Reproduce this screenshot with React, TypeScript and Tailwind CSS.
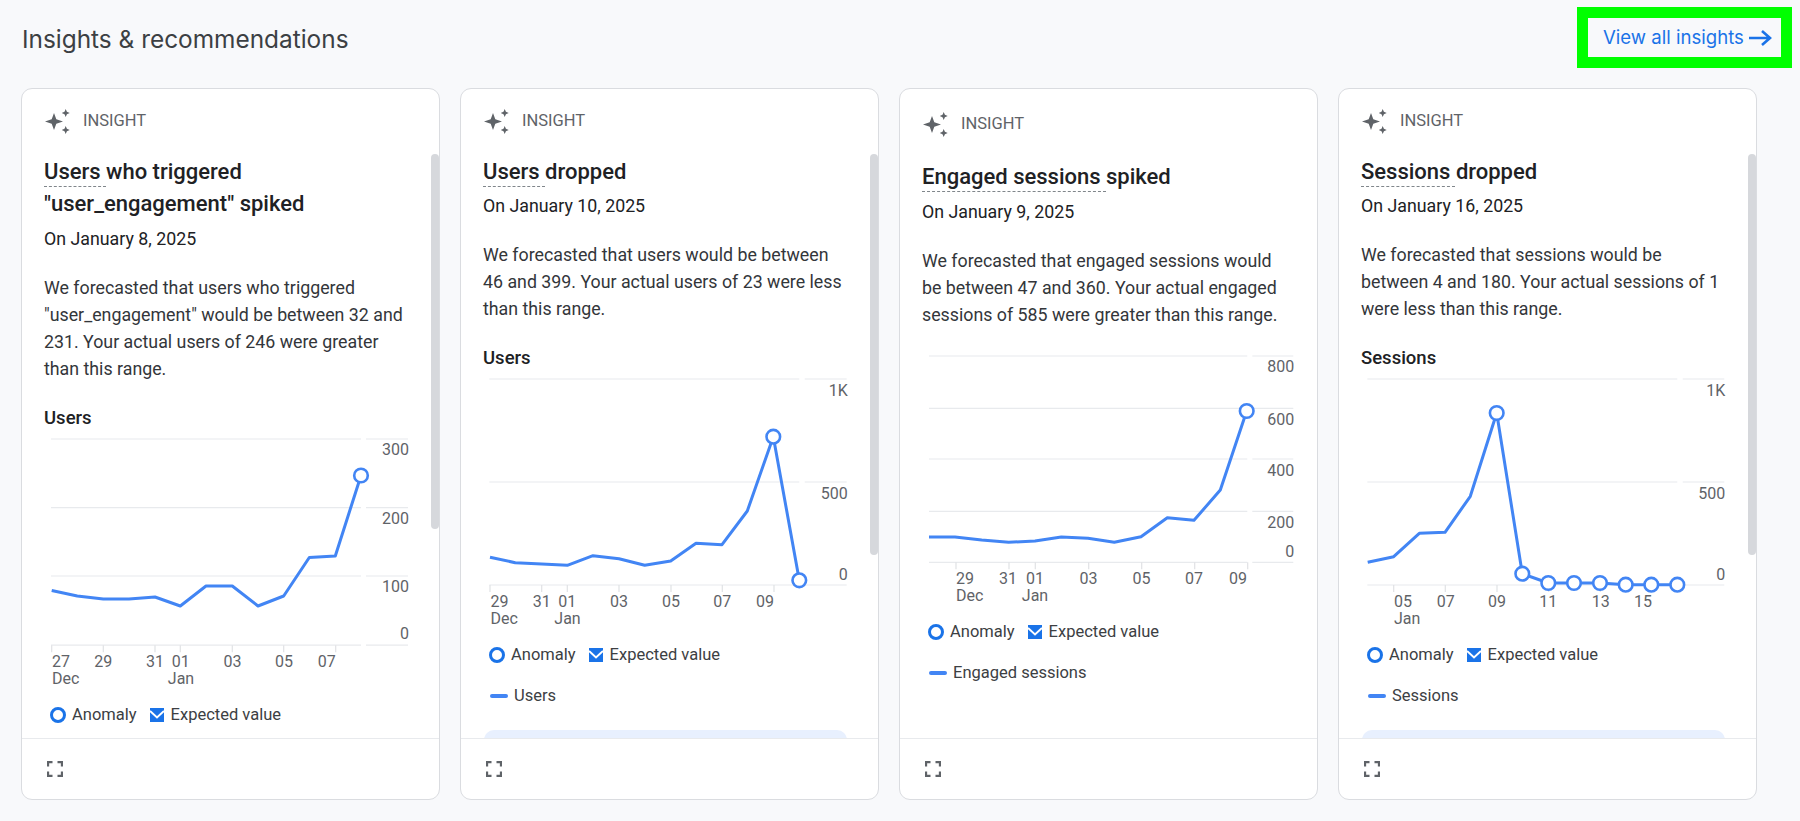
const FONT = "font-['Roboto',sans-serif]"

type Pt = [number, number]
type XLabel = { t: string; x: number; a?: 'start' | 'middle' | 'end' }

interface ChartProps {
  grid: number[]
  x0: number
  x1: number
  x2: number
  x3: number
  yLabels: { t: string; y: number }[]
  ticks: number[]
  xLabels: XLabel[]
  months: XLabel[]
  points: Pt[]
  dots: Pt[]
}

function Chart({ grid, x0, x1, x2, x3, yLabels, ticks, xLabels, months, points, dots }: ChartProps) {
  const base = grid[grid.length - 1]
  return (
    <svg width="372" height="250" viewBox="23 -2 372 250" className="block overflow-visible">
      {grid.map((y) => (
        <g key={y} stroke="#e8eaed" strokeWidth="1.2">
          <line x1={x0} x2={x1} y1={y} y2={y} />
          <line x1={x2} x2={x3} y1={y} y2={y} />
        </g>
      ))}
      {ticks.map((x) => (
        <line key={x} x1={x} x2={x} y1={base} y2={base + 7} stroke="#e0e2e5" strokeWidth="1.2" />
      ))}
      <g fill="#5f6368" fontSize="16" fontFamily="Roboto, sans-serif">
        {yLabels.map((l) => (
          <text key={l.t} x={x3 + 1} y={l.y} textAnchor="end">
            {l.t}
          </text>
        ))}
        {xLabels.map((l) => (
          <text key={l.t} x={l.x} y={base + 22} textAnchor={l.a ?? 'middle'}>
            {l.t}
          </text>
        ))}
        {months.map((l) => (
          <text key={l.t} x={l.x} y={base + 38.5} textAnchor={l.a ?? 'middle'}>
            {l.t}
          </text>
        ))}
      </g>
      <polyline
        points={points.map((p) => p.join(',')).join(' ')}
        fill="none"
        stroke="#4285f4"
        strokeWidth="3"
        strokeLinejoin="round"
      />
      {dots.map(([x, y]) => (
        <circle key={x} cx={x} cy={y} r="6.8" fill="#fff" stroke="#4285f4" strokeWidth="2.6" />
      ))}
    </svg>
  )
}

function SparkleIcon() {
  return (
    <svg width="27" height="27" viewBox="0 0 27 27" fill="#5f6368" className="shrink-0">
      <path d="M10 5 12.300 11.200 19 13.500 12.300 15.800 10 22 7.700 15.800 1 13.500 7.700 11.200Z" />
      <path d="M21.700 1 22.900 3.800 25.700 5 22.900 6.200 21.700 9 20.500 6.200 17.700 5 20.500 3.800Z" />
      <path d="M21.700 18 22.900 20.800 25.700 22 22.900 23.200 21.700 26 20.500 23.200 17.700 22 20.500 20.800Z" />
    </svg>
  )
}

function ExpandIcon() {
  return (
    <svg width="16" height="16" viewBox="0 0 16 16" fill="none" stroke="#5f6368" strokeWidth="2.3">
      <path d="M1 5.500V1H5.500M10.500 1H15V5.500M15 10.500V15H10.500M5.500 15H1V10.500" />
    </svg>
  )
}

function ExpectedIcon() {
  return (
    <svg width="14" height="14" viewBox="0 0 14 14" className="block shrink-0">
      <rect width="14" height="14" fill="#1a73e8" />
      <path d="M0 3 7 9.500 14 3" fill="none" stroke="#fff" strokeWidth="2" />
    </svg>
  )
}

function Legend({ name }: { name?: string }) {
  return (
    <div className="text-[16.5px] leading-[24px] text-[#3c4043]">
      <div className="flex items-center">
        <span className="ml-[6px] size-[16px] shrink-0 rounded-full border-[3px] border-[#1a73e8]" />
        <span className="ml-[6px]">Anomaly</span>
        <span className="ml-[13px]">
          <ExpectedIcon />
        </span>
        <span className="ml-[7px]">Expected value</span>
      </div>
      {name && (
        <div className="mt-[17px] flex items-center">
          <span className="ml-[7px] h-[4px] w-[18px] rounded-full bg-[#4285f4]" />
          <span className="ml-[6px]">{name}</span>
        </div>
      )}
    </div>
  )
}

interface CardProps {
  lead: string
  rest: string
  date: string
  body: string[]
  chartTitle?: string
  chart: ChartProps
  legendName?: string
  scrollHeight?: number
  banner?: boolean
  offset?: boolean
  compact?: boolean
}

function InsightCard({ lead, rest, date, body, chartTitle, chart, legendName, scrollHeight, banner, offset, compact }: CardProps) {
  return (
    <div className="relative flex h-[712px] w-[419px] shrink-0 flex-col overflow-hidden rounded-[11px] border border-[#dadce0] bg-white">
      <div className={offset ? 'min-h-0 flex-1 overflow-hidden pt-[22px] pl-[22px]' : 'min-h-0 flex-1 overflow-hidden pt-[19px] pl-[22px]'}>
        <div className="flex h-[27px] items-center gap-[12px]">
          <SparkleIcon />
          <span className="text-[16.5px] text-[#5f6368]">INSIGHT</span>
        </div>
        <h3 className={offset ? 'mt-[23px] w-[350px] text-[22px] leading-[32px] font-medium text-[#202124]' : 'mt-[21px] w-[350px] text-[22px] leading-[32px] font-medium text-[#202124]'}>
          <span className="underline decoration-[#80868b] decoration-dashed decoration-1 underline-offset-[7px]">{lead}</span>
          {rest}
        </h3>
        <p className={compact ? 'mt-[2px] text-[17.8px] leading-[32px] text-[#202124]' : 'mt-[3px] text-[17.8px] leading-[32px] text-[#202124]'}>{date}</p>
        <div className="mt-[19px] text-[17.8px] leading-[27px] text-[#33363a]">
          {body.map((line) => (
            <div key={line} className="whitespace-nowrap">
              {line}
            </div>
          ))}
        </div>
        {chartTitle ? (
          <h4 className="mt-[23px] mb-[5px] text-[18.5px] leading-[27px] font-medium text-[#202124]">{chartTitle}</h4>
        ) : (
          <div className="h-[26px]" />
        )}
        <Chart {...chart} />
        <div className="mt-[16px]">
          <Legend name={legendName} />
        </div>
        {banner && <div className="mt-[22px] ml-[1px] h-[40px] w-[363px] rounded-[10px] bg-[#e8f0fe]" />}
      </div>
      {scrollHeight && (
        <div className="absolute top-[65px] right-0 w-[8px] rounded-[4px] bg-[#d6d8dc]" style={{ height: scrollHeight }} />
      )}
      <div className="flex h-[61px] shrink-0 items-center border-t border-[#e8eaed] pl-[25px]">
        <ExpandIcon />
      </div>
    </div>
  )
}

const card1: ChartProps = {
  grid: [0, 68.7, 137, 206.2],
  x0: 30,
  x1: 340,
  x2: 345,
  x3: 387,
  yLabels: [
    { t: '300', y: 16.4 },
    { t: '200', y: 85.2 },
    { t: '100', y: 153.2 },
    { t: '0', y: 200.2 },
  ],
  ticks: [30.7, 82.3, 134, 159.3, 211.3, 262.7, 314.7],
  xLabels: [
    { t: '27', x: 31, a: 'start' },
    { t: '29', x: 82.3 },
    { t: '31', x: 134 },
    { t: '01', x: 159.7 },
    { t: '03', x: 211.5 },
    { t: '05', x: 263 },
    { t: '07', x: 314.7, a: 'end' },
  ],
  months: [
    { t: 'Dec', x: 31, a: 'start' },
    { t: 'Jan', x: 160 },
  ],
  points: [
    [30.7, 151.5],
    [56.3, 157],
    [82.3, 160],
    [108, 160],
    [134, 158],
    [159.3, 167],
    [185, 147],
    [211.3, 147],
    [237, 167],
    [262.7, 157],
    [288.3, 118.5],
    [314.3, 117],
    [340, 36.5],
  ],
  dots: [[340, 36.5]],
}

const card2: ChartProps = {
  grid: [0, 103, 206],
  x0: 29.3,
  x1: 339.3,
  x2: 344.7,
  x3: 386.7,
  yLabels: [
    { t: '1K', y: 17 },
    { t: '500', y: 119.7 },
    { t: '0', y: 200.7 },
  ],
  ticks: [30, 81.7, 107.3, 159, 211, 262.3, 314],
  xLabels: [
    { t: '29', x: 30.5, a: 'start' },
    { t: '31', x: 81.7 },
    { t: '01', x: 107.3 },
    { t: '03', x: 159 },
    { t: '05', x: 211 },
    { t: '07', x: 262.3 },
    { t: '09', x: 314, a: 'end' },
  ],
  months: [
    { t: 'Dec', x: 30.5, a: 'start' },
    { t: 'Jan', x: 107.5 },
  ],
  points: [
    [30, 178.3],
    [55.3, 183.7],
    [81.7, 185],
    [107.3, 186.3],
    [133, 176.7],
    [159, 179.7],
    [184.7, 186.3],
    [210.7, 182],
    [236, 164.3],
    [262, 165.7],
    [287.3, 132],
    [313.3, 57.7],
    [339.3, 201.3],
  ],
  dots: [
    [313.3, 57.7],
    [339.3, 201.3],
  ],
}

const card3: ChartProps = {
  grid: [0, 52.3, 103, 155.3, 206.3],
  x0: 30,
  x1: 348.3,
  x2: 353.3,
  x3: 394.3,
  yLabels: [
    { t: '800', y: 16.4 },
    { t: '600', y: 69 },
    { t: '400', y: 119.7 },
    { t: '200', y: 171.7 },
    { t: '0', y: 200.7 },
  ],
  ticks: [57, 110, 136.3, 189.7, 242.7, 295.7, 348.7],
  xLabels: [
    { t: '29', x: 57, a: 'start' },
    { t: '31', x: 109 },
    { t: '01', x: 136 },
    { t: '03', x: 189.5 },
    { t: '05', x: 242.5 },
    { t: '07', x: 295 },
    { t: '09', x: 348, a: 'end' },
  ],
  months: [
    { t: 'Dec', x: 57, a: 'start' },
    { t: 'Jan', x: 136 },
  ],
  points: [
    [30, 181],
    [56, 181],
    [82.7, 184],
    [109.7, 186.3],
    [136, 185],
    [162.3, 181],
    [189, 182.3],
    [215.3, 186.3],
    [242, 180.7],
    [268.3, 161.7],
    [295, 164.3],
    [321.3, 134],
    [347.7, 55],
  ],
  dots: [[347.7, 55]],
}

const card4: ChartProps = {
  grid: [0, 103, 206],
  x0: 29.3,
  x1: 339.3,
  x2: 344.7,
  x3: 386.3,
  yLabels: [
    { t: '1K', y: 17 },
    { t: '500', y: 119.7 },
    { t: '0', y: 200.7 },
  ],
  ticks: [55.7, 107.3, 159, 210.7, 262.3, 314],
  xLabels: [
    { t: '05', x: 56, a: 'start' },
    { t: '07', x: 107.7 },
    { t: '09', x: 159 },
    { t: '11', x: 210.3 },
    { t: '13', x: 262.7 },
    { t: '15', x: 314, a: 'end' },
  ],
  months: [{ t: 'Jan', x: 56, a: 'start' }],
  points: [
    [29.7, 183.3],
    [55.7, 177.7],
    [81.3, 154.3],
    [107, 153.3],
    [132.3, 117.3],
    [158.7, 34],
    [184.3, 194.7],
    [210.3, 204],
    [236, 204],
    [262, 204],
    [287.7, 205.7],
    [313.3, 205.7],
    [339.3, 205.7],
  ],
  dots: [
    [158.7, 34],
    [184.3, 194.7],
    [210.3, 204],
    [236, 204],
    [262, 204],
    [287.7, 205.7],
    [313.3, 205.7],
    [339.3, 205.7],
  ],
}

export default function App() {
  return (
    <div className={`${FONT} h-[821px] w-[1800px] overflow-hidden bg-[#f8f9fb]`}>
      <header className="flex h-[88px] items-start justify-between pt-[7px] pr-[8px] pl-[22px]">
        <h2 className="mt-[16px] font-['Inter',sans-serif] text-[24.4px] leading-[32px] text-[#3c4043]">Insights &amp; recommendations</h2>
        <a className="flex h-[61px] w-[215px] items-center border-[11px] border-[#00ff00] pt-[1px] pl-[15px] font-['Inter',sans-serif] text-[18.6px] whitespace-nowrap text-[#1a73e8]">
          View all insights
          <svg width="24" height="18" viewBox="0 0 24 18" fill="none" stroke="#1a73e8" strokeWidth="2.6" className="ml-[4px] shrink-0">
            <path d="M1 9H22M14 2 22 9 14 16" />
          </svg>
        </a>
      </header>
      <div className="flex gap-[20px] pl-[21px]">
        <InsightCard
          lead="Users "
          rest={'who triggered "user_engagement" spiked'}
          date="On January 8, 2025"
          body={['We forecasted that users who triggered', '"user_engagement" would be between 32 and', '231. Your actual users of 246 were greater', 'than this range.']}
          chartTitle="Users"
          chart={card1}
          scrollHeight={375}
        />
        <InsightCard
          lead="Users "
          rest="dropped"
          date="On January 10, 2025"
          body={['We forecasted that users would be between', '46 and 399. Your actual users of 23 were less', 'than this range.']}
          chartTitle="Users"
          chart={card2}
          legendName="Users"
          scrollHeight={401}
          banner
          compact
        />
        <InsightCard
          lead="Engaged sessions "
          rest="spiked"
          date="On January 9, 2025"
          body={['We forecasted that engaged sessions would', 'be between 47 and 360. Your actual engaged', 'sessions of 585 were greater than this range.']}
          chart={card3}
          legendName="Engaged sessions"
          offset
        />
        <InsightCard
          lead="Sessions "
          rest="dropped"
          date="On January 16, 2025"
          body={['We forecasted that sessions would be', 'between 4 and 180. Your actual sessions of 1', 'were less than this range.']}
          chartTitle="Sessions"
          chart={card4}
          legendName="Sessions"
          scrollHeight={401}
          banner
          compact
        />
      </div>
    </div>
  )
}
